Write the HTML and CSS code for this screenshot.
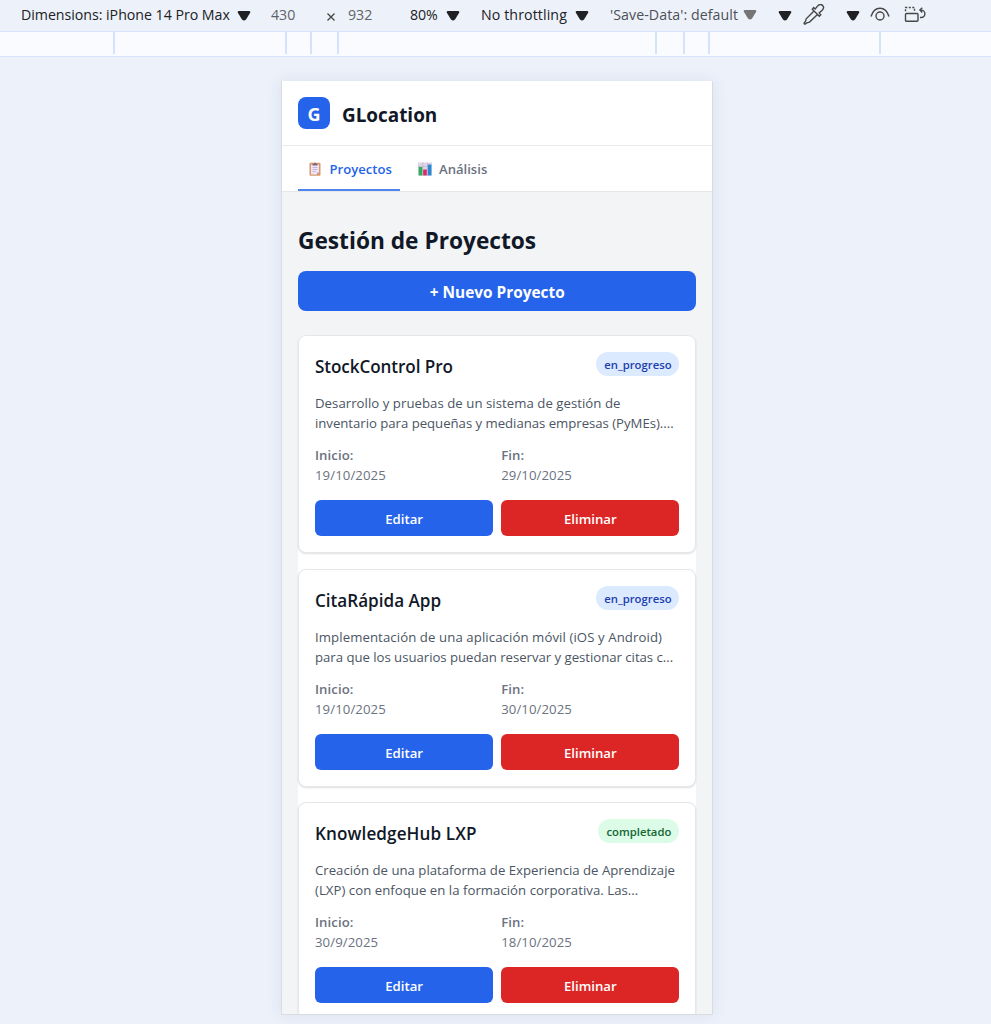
FILE: index.html
```
<!DOCTYPE html>
<html lang="es">
<head>
<meta charset="utf-8">
<title>GLocation</title>
<link rel="stylesheet" href="styles.css">
</head>
<body>
<div class="toolbar">
  <span class="tool dims">Dimensions: iPhone 14 Pro Max</span>
  <svg class="arrow a1" viewBox="0 0 14 10"><path d="M2 0h10q2 0 1 2L9 8.500q-2 2-4 0L1 2Q0 0 2 0z"/></svg>
  <span class="tool width">430</span>
  <svg class="times" viewBox="0 0 8 8"><path d="M.5.5l7 7m0-7l-7 7"/></svg>
  <span class="tool height">932</span>
  <span class="tool scale">80%</span>
  <svg class="arrow a2" viewBox="0 0 14 10"><path d="M2 0h10q2 0 1 2L9 8.500q-2 2-4 0L1 2Q0 0 2 0z"/></svg>
  <span class="tool throttle">No throttling</span>
  <svg class="arrow a3" viewBox="0 0 14 10"><path d="M2 0h10q2 0 1 2L9 8.500q-2 2-4 0L1 2Q0 0 2 0z"/></svg>
  <span class="tool save">'Save-Data': default</span>
  <svg class="arrow a4" viewBox="0 0 14 10"><path d="M2 0h10q2 0 1 2L9 8.500q-2 2-4 0L1 2Q0 0 2 0z"/></svg>
  <svg class="arrow a5" viewBox="0 0 14 10"><path d="M2 0h10q2 0 1 2L9 8.500q-2 2-4 0L1 2Q0 0 2 0z"/></svg>
  <svg class="icon picker" viewBox="0 0 22 22"><path d="M11 7L3.200 14.800 2.400 17.500 1.200 18.800q-.4 1.300 1 1.300l1.500-1.200 2.800-.8L14.500 10.500M9.300 5.300l7 7 1.500-1.500-1.600-1.900 3-2.600q2.600-2.700.4-4.900-2.300-2-4.900.5l-2.500 3-1.500-1.400z"/></svg>
  <svg class="arrow a6" viewBox="0 0 14 10"><path d="M2 0h10q2 0 1 2L9 8.500q-2 2-4 0L1 2Q0 0 2 0z"/></svg>
  <svg class="icon eye" viewBox="0 0 20 14"><path d="M1 9.500C2.600 4 5.800 1.200 10 1.200S17.400 4 19 9.500"/><circle cx="10" cy="9" r="4"/></svg>
  <svg class="icon rotate" viewBox="0 0 22 17"><rect x="1.500" y="7.500" width="12.500" height="7.800" rx="1"/><path d="M1.500 5.200V1.500h9v3.700" stroke-dasharray="2 1.500"/><path d="M16 11.500h1.200a3.700 3.700 0 0 0 0-7.400H16M18.300 1.700L15.900 4.100l2.400 2.400"/></svg>
</div>
<div class="ruler"><i></i><i></i><i></i><i></i><i></i><i></i><i></i><i></i></div>
<div class="stage">
<div class="device">
  <header class="header"><span class="logo">G</span><span class="brand">GLocation</span></header>
  <nav class="tabs">
    <a class="tab active"><svg class="emoji" viewBox="0 0 14 14"><rect x="1.500" y=".8" width="11" height="13" rx="1" fill="#dc9668"/><path d="M3 2.500h8v8L9 12.500H3z" fill="#eee6f8"/><path d="M9 12.500v-2h2z" fill="#a99bbb"/><path d="M4.500 5.500h5M4.500 7.500h5M4.500 9.500h3" stroke="#b9a9ce" stroke-width=".8"/><path d="M4.500 3.500V1.700h1.600Q7-.5 7.900 1.700h1.600v1.800z" fill="#756579"/></svg><span class="tab-projects">Proyectos</span></a>
    <a class="tab"><svg class="emoji" viewBox="0 0 14 14"><path d="M0 .5h14v13H0z" fill="#ddd5e6"/><path d="M0 4.500h14M0 9h14M4.700 0v14M9.400 0v14" stroke="#bcb0c8" stroke-width=".6"/><path d="M.7 5h3.600v8.500H.7z" fill="#2bb05c"/><path d="M5.200 7.500h3.600v6H5.200z" fill="#df2869"/><path d="M9.800 2.500h3.600v11H9.800z" fill="#2788d3"/></svg><span class="tab-analysis">Análisis</span></a>
  </nav>
  <main class="content">
    <h1 class="title">Gestión de Proyectos</h1>
    <button class="new">+ Nuevo Proyecto</button>
    <div class="list">
      <article class="card">
        <div class="card-head"><h2 class="name n1">StockControl Pro</h2><span class="badge">en_progreso</span></div>
        <p class="desc"><span class="d1">Desarrollo y pruebas de un sistema de gestión de</span><br><span class="d2">inventario para pequeñas y medianas empresas (PyMEs)....</span></p>
        <div class="dates"><div><b>Inicio:</b><span>19/10/2025</span></div><div><b>Fin:</b><span>29/10/2025</span></div></div>
        <div class="actions"><button class="edit">Editar</button><button class="delete">Eliminar</button></div>
      </article>
      <article class="card">
        <div class="card-head"><h2 class="name n2">CitaRápida App</h2><span class="badge">en_progreso</span></div>
        <p class="desc"><span class="d3">Implementación de una aplicación móvil (iOS y Android)</span><br><span class="d4">para que los usuarios puedan reservar y gestionar citas c...</span></p>
        <div class="dates"><div><b>Inicio:</b><span>19/10/2025</span></div><div><b>Fin:</b><span>30/10/2025</span></div></div>
        <div class="actions"><button class="edit">Editar</button><button class="delete">Eliminar</button></div>
      </article>
      <article class="card">
        <div class="card-head"><h2 class="name n3">KnowledgeHub LXP</h2><span class="badge done">completado</span></div>
        <p class="desc"><span class="d5">Creación de una plataforma de Experiencia de Aprendizaje</span><br><span class="d6">(LXP) con enfoque en la formación corporativa. Las...</span></p>
        <div class="dates"><div><b>Inicio:</b><span>30/9/2025</span></div><div><b>Fin:</b><span>18/10/2025</span></div></div>
        <div class="actions"><button class="edit">Editar</button><button class="delete">Eliminar</button></div>
      </article>
    </div>
  </main>
</div>
</div>
</body>
</html>
```
FILE: styles.css
```
* { box-sizing: border-box; }
body { margin: 0; height: 1024px; overflow: hidden; background: #ecf1fa; font-family: "Open Sans", "Noto Sans", sans-serif; white-space: nowrap; }
h1, h2, p { margin: 0; }
button { border: 0; padding: 0; font-family: inherit; color: #fff; display: block; }

.toolbar { height: 31px; display: flex; align-items: flex-start; background: #edf1fa; }
.tool { flex: none; font-size: 14.2px; line-height: 20px; margin-top: 5px; color: #202124; }
.dims { margin-left: 21px; width: 216px; letter-spacing: -0.03px; }
.width { margin-left: 20px; width: 55px; color: #5f6368; }
.times { flex: none; width: 8px; height: 8px; margin-top: 13px; margin-left: 1px; stroke: #444; stroke-width: 1.3; fill: none; }
.height { margin-left: 13px; width: 62px; color: #5f6368; }
.scale { width: 36px; letter-spacing: -0.1px; }
.throttle { width: 94px; margin-left: 21px; letter-spacing: 0.1px; }
.save { width: 133px; margin-left: 21px; color: #4d5055; letter-spacing: 0.07px; }
.arrow { flex: none; width: 14px; height: 10px; fill: #202124; margin-top: 11px; }
.a4 { fill: #757575; margin-top: 10px; }
.a5 { margin-left: 21px; }
.a6 { margin-left: 21px; }
.icon { flex: none; fill: none; stroke: #474747; stroke-width: 1.4; }
.picker { width: 22px; height: 22px; margin: 4px 0 0 11px; }
.eye { width: 20px; height: 14px; margin: 7px 0 0 10px; }
.rotate { width: 22px; height: 17px; margin: 6px 0 0 14px; }

.ruler { height: 26px; border-top: 1px solid #d3e3fd; border-bottom: 1px solid #d3e3fd; background: #f9fbff; display: grid; grid-template-columns: 115px 172px 25px 27px 318px 28px 25px 171px; }
.ruler i { height: 22px; border-right: 2px solid #d3e3fd; }

.stage { height: 967px; padding: 24px 0 0 281px; }
.device { width: 432px; height: 934px; border: 1px solid #dadce0; border-top: 0; padding-top: 0; background: #f3f4f6; overflow: hidden; box-shadow: 0 0 16px rgba(60, 80, 120, .09); }
.header { height: 65px; background: #fff; border-bottom: 1px solid #e9ebee; display: flex; padding: 16px 16px; gap: 12px; }
.logo { width: 32px; height: 32px; border-radius: 8px; background: #2563eb; color: #fff; font-size: 18px; font-weight: 700; line-height: 34px; text-align: center; }
.brand { font-size: 18.9px; font-weight: 700; line-height: 36px; color: #111827; }
.tabs { height: 46px; background: #fff; border-bottom: 1px solid #e5e7eb; display: flex; padding: 0 16px; gap: 8px; }
.tab { display: flex; align-items: center; gap: 7px; padding: 0 8px 0 10px; height: 46px; font-size: 13.1px; font-weight: 600; color: #6b7280; }
.tab.active { width: 102px; height: 45px; color: #2563eb; border-bottom: 2px solid #4f85ef; padding-top: 3px; }
.tab.active .tab-projects { margin-left: .5px; }
.emoji { width: 14px; height: 14px; flex: none; }
.content { padding: 33px 16px; }
.title { font-size: 22.7px; line-height: 32px; font-weight: 700; color: #111827; }
.new { width: 398.4px; height: 40px; margin: 14px 0 24px; padding-top: 2px; border-radius: 8px; background: #2563eb; font-size: 15.4px; font-weight: 700; }
.list { width: 398.4px; display: grid; gap: 15.6px; background: #fff; border-radius: 8px; }
.card { height: 218px; padding: 16px; border: 1px solid #e5e7eb; border-radius: 8px; background: #fff; box-shadow: 0 1px 2px rgba(0, 0, 0, .13); }
.card-head { display: flex; justify-content: space-between; align-items: flex-start; height: 28px; }
.name { font-size: 17.1px; line-height: 29px; font-weight: 600; color: #111827; }
.n1 { letter-spacing: -0.08px; }
.n3 { letter-spacing: 0.1px; }
.badge { width: 83px; height: 24px; border-radius: 12px; text-align: center; background: #dbeafe; color: #1e40af; font-size: 11.3px; font-weight: 600; line-height: 25px; }
.badge.done { width: 81px; background: #dcfce7; color: #166534; }
.desc { margin: 13px 0 12px; color: #4b5563; font-size: 13.2px; line-height: 20px; }
.d1 { letter-spacing: 0.04px; }
.d2, .d4 { letter-spacing: -0.03px; }
.d3 { letter-spacing: 0.09px; }
.d6 { letter-spacing: 0.03px; }
.dates, .actions { display: grid; grid-template-columns: 1fr 1fr; gap: 8px; }
.dates { height: 40px; font-size: 13.2px; line-height: 20px; color: #6b7280; }
.dates b, .dates span { display: block; font-weight: 400; letter-spacing: 0.08px; }
.dates b { font-weight: 600; }
.actions { margin-top: 15px; }
.edit, .delete { height: 36px; border-radius: 6px; font-size: 13.2px; font-weight: 600; padding-top: 2px; }
.edit { background: #2563eb; }
.delete { background: #dc2626; }
```
